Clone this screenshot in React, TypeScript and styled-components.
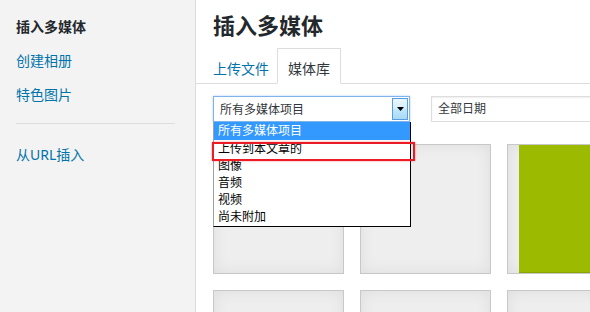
import React from "react";
import styled, { createGlobalStyle } from "styled-components";

const GlobalStyle = createGlobalStyle`
  html, body {
    margin: 0;
    padding: 0;
    background: #fff;
    overflow: hidden;
  }
  body {
    font-family: "Noto Sans", "Noto Sans CJK SC", sans-serif;
    color: #23282d;
  }
`;

const Frame = styled.div`
  display: flex;
  width: 590px;
  height: 312px;
  overflow: hidden;
`;

const Sidebar = styled.nav`
  flex: 0 0 195px;
  background: #f3f3f3;
  border-right: 1px solid #dddddd;
  padding-top: 10px;
`;

const MenuItem = styled.a<{ $current?: boolean }>`
  display: block;
  padding: 8px 16px;
  font-size: 14px;
  line-height: 18px;
  color: ${(p) => (p.$current ? "#23282d" : "#0073aa")};
  font-weight: ${(p) => (p.$current ? 700 : 400)};
  text-decoration: none;
`;

const Separator = styled.div`
  height: 1px;
  background: #dddddd;
  margin: 11px 20px 14px 16px;
`;

const Main = styled.main`
  flex: 1;
  min-width: 0;
  display: flex;
  flex-direction: column;
`;

const Title = styled.h1`
  margin: 0;
  padding: 0 17px;
  height: 48px;
  line-height: 50px;
  font-size: 22px;
  font-weight: 700;
  color: #23282d;
`;

const Tabs = styled.div`
  display: flex;
  align-items: flex-end;
  height: 35px;
  padding-left: 17px;
  border-bottom: 1px solid #dddddd;
`;

const Tab = styled.a<{ $active?: boolean }>`
  box-sizing: border-box;
  height: ${(p) => (p.$active ? "36px" : "35px")};
  margin-bottom: ${(p) => (p.$active ? "-1px" : "0")};
  padding: ${(p) => (p.$active ? "11px 10px 0" : "12px 8px 0 0")};
  font-size: 14px;
  line-height: 18px;
  color: ${(p) => (p.$active ? "#32373c" : "#0073aa")};
  background: #fff;
  border: ${(p) => (p.$active ? "1px solid #dddddd" : "none")};
  border-bottom: ${(p) => (p.$active ? "1px solid #fff" : "none")};
  text-decoration: none;
`;

const Content = styled.div`
  padding: 12px 0 0 17px;
`;

const Toolbar = styled.div`
  display: flex;
  gap: 21px;
  height: 26px;
`;

const SelectWrap = styled.div`
  position: relative;
  flex: 0 0 197px;
`;

const SelectBox = styled.div`
  box-sizing: border-box;
  display: flex;
  align-items: center;
  height: 26px;
  border: 1px solid #7eb4ea;
  box-shadow: 0 0 2px rgba(86, 157, 229, 0.5);
  background: #fff;
  font-size: 12px;
  color: #32373c;
  padding-left: 6px;
`;

const SelectText = styled.span`
  flex: 1;
`;

const ArrowButton = styled.span`
  align-self: stretch;
  box-sizing: border-box;
  width: 16px;
  margin: 1px;
  border: 1px solid #569de5;
  background: linear-gradient(#eaf6fd, #d9f0fc 45%, #bee6fd 55%, #a7d9f5);
  display: flex;
  align-items: center;
  justify-content: center;
`;

const DropList = styled.ul`
  position: absolute;
  top: 26px;
  left: 0;
  width: 198px;
  box-sizing: border-box;
  margin: 0;
  padding: 0 0 1px;
  list-style: none;
  background: #fff;
  border: 1px solid #000;
  border-top: none;
  border-left-color: #a0a0a0;
  z-index: 5;
`;

const DropItem = styled.li<{ $selected?: boolean }>`
  height: ${(p) => (p.$selected ? "18px" : "17px")};
  line-height: ${(p) => (p.$selected ? "18px" : "17px")};
  padding-left: 4px;
  font-size: 12px;
  color: ${(p) => (p.$selected ? "#fff" : "#000")};
  background: ${(p) => (p.$selected ? "#3399ff" : "transparent")};
`;

const Highlight = styled.div`
  position: absolute;
  left: -1px;
  top: 46px;
  width: 203px;
  height: 19px;
  box-sizing: border-box;
  border: 2px solid #ec1c24;
  box-shadow: 0 0 2px rgba(255, 0, 0, 0.45);
  z-index: 6;
`;

const DateSelect = styled.div`
  flex: 0 0 200px;
  box-sizing: border-box;
  height: 26px;
  border: 1px solid #dddddd;
  box-shadow: inset 0 1px 2px rgba(0, 0, 0, 0.07);
  background: #fff;
  font-size: 12px;
  line-height: 24px;
  padding-left: 6px;
  color: #32373c;
`;

const Grid = styled.div`
  display: grid;
  grid-template-columns: repeat(3, 131px);
  grid-auto-rows: 130px;
  gap: 16px;
  margin-top: 22px;
`;

const Tile = styled.div`
  box-sizing: border-box;
  display: flex;
  background: #eeeeee;
  border: 1px solid #c8c8c8;
  box-shadow: inset 0 0 15px rgba(0, 0, 0, 0.07);
`;

const Thumb = styled.div`
  flex: 1;
  margin: 0 11px;
  background: #9cba00;
  border-bottom: 1px solid #8aa500;
`;

const options = ["所有多媒体项目", "上传到本文章的", "图像", "音频", "视频", "尚未附加"];

export default function App() {
  return (
    <>
      <GlobalStyle />
      <Frame>
        <Sidebar>
          <MenuItem $current>插入多媒体</MenuItem>
          <MenuItem>创建相册</MenuItem>
          <MenuItem>特色图片</MenuItem>
          <Separator />
          <MenuItem>从URL插入</MenuItem>
        </Sidebar>
        <Main>
          <Title>插入多媒体</Title>
          <Tabs>
            <Tab>上传文件</Tab>
            <Tab $active>媒体库</Tab>
          </Tabs>
          <Content>
            <Toolbar>
              <SelectWrap>
                <SelectBox>
                  <SelectText>所有多媒体项目</SelectText>
                  <ArrowButton>
                    <svg width="7" height="4" viewBox="0 0 7 4">
                      <path d="M0 0h7L3.5 4z" fill="#000" />
                    </svg>
                  </ArrowButton>
                </SelectBox>
                <DropList>
                  {options.map((o, i) => (
                    <DropItem key={o} $selected={i === 0}>
                      {o}
                    </DropItem>
                  ))}
                </DropList>
                <Highlight />
              </SelectWrap>
              <DateSelect>全部日期</DateSelect>
            </Toolbar>
            <Grid>
              <Tile />
              <Tile />
              <Tile>
                <Thumb />
              </Tile>
              <Tile />
              <Tile />
              <Tile />
            </Grid>
          </Content>
        </Main>
      </Frame>
    </>
  );
}
